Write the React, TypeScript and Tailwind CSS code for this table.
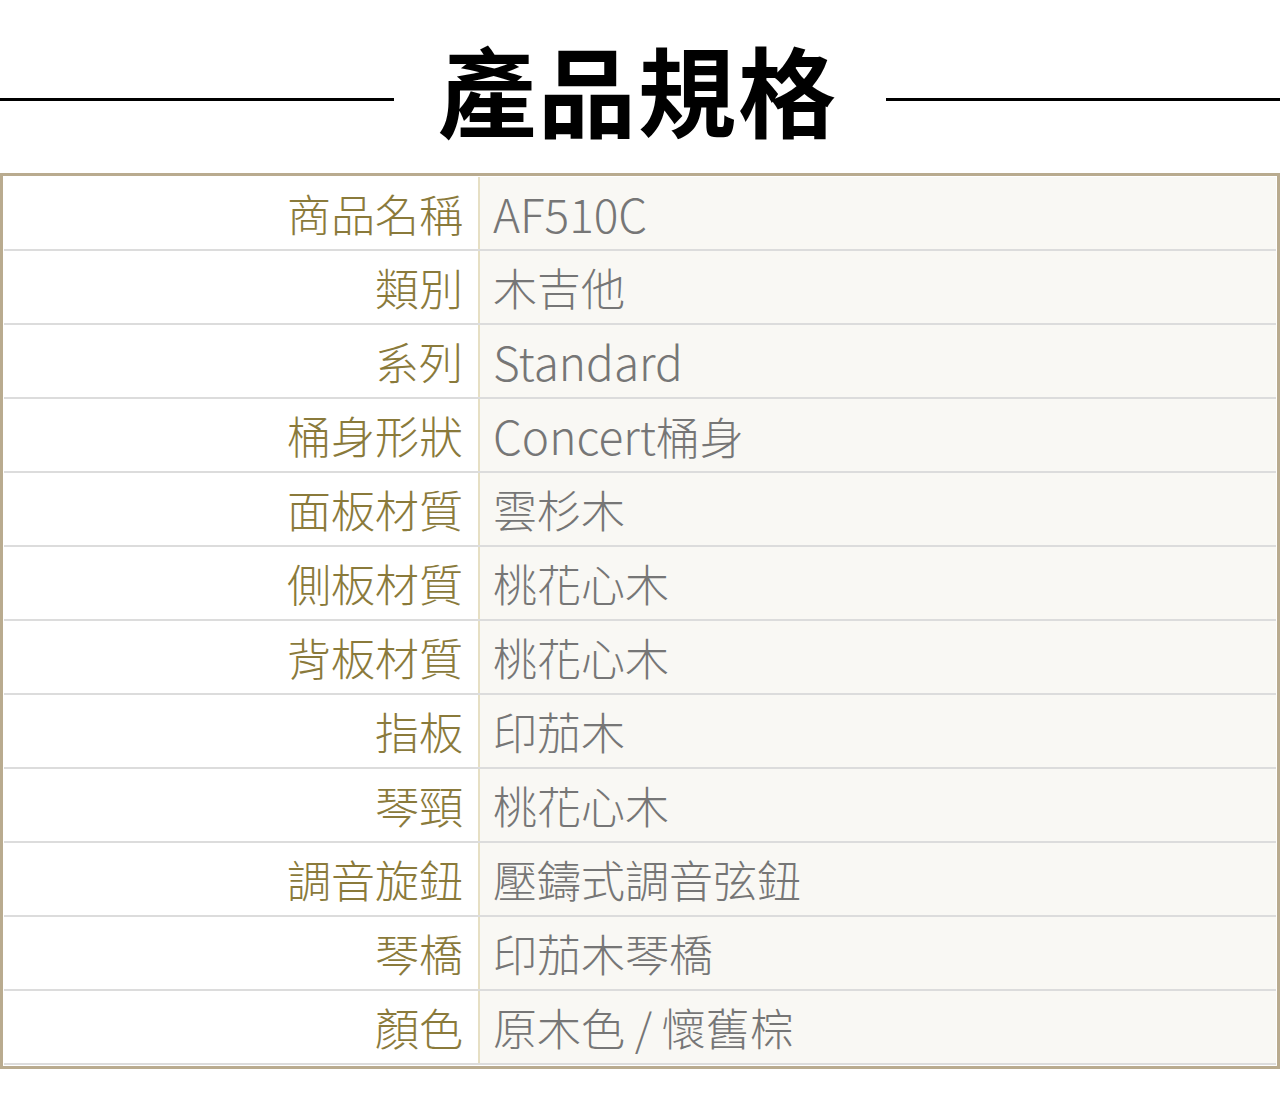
const specs: [string, string][] = [
  ['商品名稱', 'AF510C'],
  ['類別', '木吉他'],
  ['系列', 'Standard'],
  ['桶身形狀', 'Concert桶身'],
  ['面板材質', '雲杉木'],
  ['側板材質', '桃花心木'],
  ['背板材質', '桃花心木'],
  ['指板', '印茄木'],
  ['琴頸', '桃花心木'],
  ['調音旋鈕', '壓鑄式調音弦鈕'],
  ['琴橋', '印茄木琴橋'],
  ['顏色', '原木色 / 懷舊棕'],
];

// latin runs are set a little larger, like the reference's western font
function Value({ text }: { text: string }) {
  return (
    <span>
      {text.split(/([A-Za-z0-9]+)/).map((part, i) =>
        /^[A-Za-z0-9]+$/.test(part) ? (
          <span key={i} className="text-[46px]">
            {part}
          </span>
        ) : (
          <span key={i}>{part}</span>
        ),
      )}
    </span>
  );
}

export default function App() {
  return (
    <div className="min-h-[1114px] w-[1280px] bg-white font-['Noto_Sans_CJK_TC','Noto_Sans',sans-serif]">
      <div className="flex h-[173px] items-start">
        <div className="mt-[98px] mr-[44px] h-[3px] flex-1 bg-black" />
        <h1 className="mt-[38px] text-[98px] font-bold leading-none tracking-[2px] text-black">產品規格</h1>
        <div className="mt-[98px] ml-[48px] h-[3px] flex-1 bg-black" />
      </div>
      <div className="border-[3px] border-[#b9ab8f] bg-white p-px">
        {specs.map(([label, value]) => (
          <div key={label} className="flex h-[74px] border-b-2 border-[#dcdcdc]">
            <div className="flex w-[474px] items-center justify-end pr-[15px] text-[44px] font-light leading-none text-[#8a7a3b]">
              {label}
            </div>
            <div className="flex flex-1 items-center border-l-2 border-[#e6dfc4] bg-[#f9f8f4] pl-[13px] text-[44px] font-light leading-none text-[#767676]">
              <Value text={value} />
            </div>
          </div>
        ))}
      </div>
    </div>
  );
}
